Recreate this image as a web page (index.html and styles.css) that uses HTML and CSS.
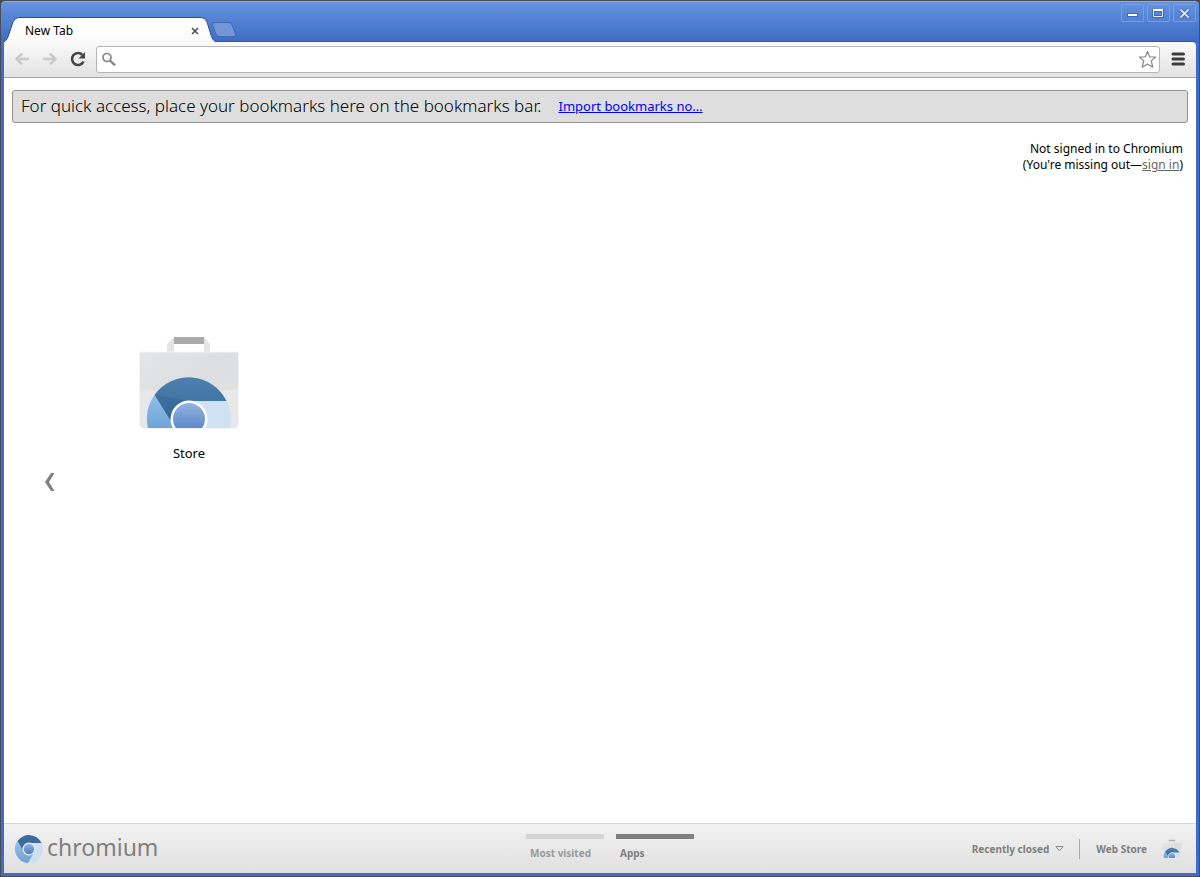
FILE: index.html
```html
<!DOCTYPE html>
<html lang="en">
<head>
<meta charset="utf-8">
<title>New Tab</title>
<link rel="stylesheet" href="styles.css">
</head>
<body>
<div class="window">
  <header class="titlebar">
    <div class="tab">
      <svg class="tab-shape" width="212" height="27" viewBox="0 0 212 27" aria-hidden="true">
        <defs>
          <linearGradient id="tabFill" x1="0" y1="0" x2="0" y2="1"><stop offset="0" stop-color="#fff"/><stop offset="1" stop-color="#fafafa"/></linearGradient>
        </defs>
        <path d="M0 27V26C3 24 4 21 5 18L9 6Q11 1.500 15 1.500H196Q201 1.500 203 6L207 19Q209 25.500 212 25.500V27Z" fill="url(#tabFill)"/>
        <path d="M0 26C3 24 4 21 5 18L9 6Q11 1.500 15 1.500H196Q201 1.500 203 6L207 19Q209 25.500 212 25.500" fill="none" stroke="#2b4f92"/>
      </svg>
      <span class="tab-title">New Tab</span>
      <button class="tab-close" aria-label="Close tab"><svg width="8" height="8" viewBox="0 0 8 8"><path d="M1 1L7 7M7 1L1 7" stroke="#555" stroke-width="1.700"/></svg></button>
    </div>
    <button class="new-tab" aria-label="New tab"><svg width="26" height="17" viewBox="0 0 26 17"><path d="M3 1.500H17Q20 1.500 21 4L24.500 13Q25 15.500 23 15.500H9Q6 15.500 5 13L1.500 4Q1 1.500 3 1.500Z" fill="#7396d8" stroke="#4569b2"/></svg></button>
    <div class="window-controls">
      <button class="control" aria-label="Minimize"><svg width="13" height="11" viewBox="0 0 13 11"><path d="M1 7H12" stroke="#2c559f" stroke-opacity=".6" stroke-width="4"/><path d="M2 7H11" stroke="#fff" stroke-width="2"/></svg></button>
      <button class="control" aria-label="Maximize"><svg width="13" height="11" viewBox="0 0 13 11"><path d="M1.500 2.500H10.500V8.500H1.500Z" fill="none" stroke="#2c559f" stroke-opacity=".6" stroke-width="3"/><path d="M1.500 2.500H10.500V8.500H1.500Z" fill="none" stroke="#e6eefb"/><path d="M1 2H11" stroke="#fff" stroke-width="2"/></svg></button>
      <button class="control" aria-label="Close"><svg width="13" height="11" viewBox="0 0 13 11"><path d="M2.500 1.500L10.500 9.500M10.500 1.500L2.500 9.500" stroke="#2c559f" stroke-opacity=".6" stroke-width="3.500"/><path d="M2.500 1.500L10.500 9.500M10.500 1.500L2.500 9.500" stroke="#f4f8ff" stroke-width="1.700"/></svg></button>
    </div>
  </header>

  <nav class="toolbar" aria-label="Navigation">
    <button class="tool" aria-label="Back" disabled><svg width="16" height="16" viewBox="0 0 16 16"><path d="M15 8H3M8 2.500L2.500 8L8 13.500" fill="none" stroke="#c9c9c9" stroke-width="2.400"/></svg></button>
    <button class="tool" aria-label="Forward" disabled><svg width="16" height="16" viewBox="0 0 16 16"><path d="M1 8H13M8 2.500L13.500 8L8 13.500" fill="none" stroke="#c9c9c9" stroke-width="2.400"/></svg></button>
    <button class="tool" aria-label="Reload"><svg width="16" height="16" viewBox="0 0 16 16"><path d="M12.500 4A6 6 0 1 0 13.500 10.500" fill="none" stroke="#474747" stroke-width="2.600"/><path d="M15 1V7.500H8.500Z" fill="#474747"/></svg></button>
    <div class="omnibox">
      <svg width="15" height="15" viewBox="0 0 15 15" aria-hidden="true"><circle cx="5" cy="5.500" r="4" fill="none" stroke="#858585" stroke-width="1.700"/><path d="M8 8.500L13 13.300" stroke="#858585" stroke-width="2.400"/></svg>
      <input class="address" type="text" aria-label="Address and search">
      <button class="star" aria-label="Bookmark this page"><svg width="19" height="19" viewBox="0 0 19 19"><path d="M9.500 1.500L11.700 7H17.500L13.200 10.900L14.800 17.200L9.500 13.900L4.200 17.200L5.800 10.900L1.500 7H7.300Z" fill="#fff" stroke="#858585" stroke-width="1.200" stroke-linejoin="round"/></svg></button>
    </div>
    <button class="menu" aria-label="Menu"><svg width="14" height="14" viewBox="0 0 14 14"><path d="M2 2H12.500M2 7H12.500M2 12H12.500" stroke="#3c3c3c" stroke-width="3" stroke-linecap="round"/></svg></button>
  </nav>

  <main class="page">
    <div class="bookmarks">
      <span class="hint">For quick access, place your bookmarks here on the bookmarks bar.</span>
      <a class="import" href="#import">Import bookmarks no…</a>
    </div>
    <p class="account">Not signed in to Chromium<br>(You're missing out—<a class="signin" href="#signin">sign in</a>)</p>
    <div class="apps">
      <button class="previous" aria-label="Previous page"><svg width="12" height="20" viewBox="0 0 12 20"><path d="M7 1H10.500L5 10L10.500 19H7L1 10Z" fill="#808080"/></svg></button>
      <a class="app" href="#store">
        <svg width="100" height="94" viewBox="0 0 100 94" aria-hidden="true">
          <defs>
            <linearGradient id="bag" x1="0" y1="0" x2="1" y2="1"><stop offset="0" stop-color="#e3e5e6"/><stop offset=".5" stop-color="#dcdedf"/><stop offset="1" stop-color="#e5e6e7"/></linearGradient>
            <linearGradient id="dark" x1="0" y1="0" x2="0" y2="1"><stop offset="0" stop-color="#4e7fac"/><stop offset="1" stop-color="#366a9d"/></linearGradient>
            <linearGradient id="mid" x1="0" y1="0" x2="0" y2="1"><stop offset="0" stop-color="#92bfe9"/><stop offset="1" stop-color="#70a4d8"/></linearGradient>
            <linearGradient id="core" x1="0" y1="0" x2="0" y2="1"><stop offset="0" stop-color="#91b3df"/><stop offset="1" stop-color="#4f7fc5"/></linearGradient>
            <clipPath id="bagClip"><path d="M0 0H100V92H0Z"/></clipPath>
          </defs>
          <g id="storeBag">
            <path d="M28 17V8L35 1H65L71 8V17H65V8H35V17Z" fill="#e3e4e5"/>
            <path d="M35 1H65V8H35Z" fill="#aaa"/>
            <path d="M.500 16H99.500V87Q99.500 92.500 94 92.500H6Q.500 92.500 .500 87Z" fill="url(#bag)" stroke="#f3f4f5"/>
            <path d="M1 54H99V87Q99 92 94 92H6Q1 92 1 87Z" fill="#e9eaeb" opacity=".75"/>
            <g clip-path="url(#bagClip)">
              <circle cx="50" cy="83" r="42" fill="#cfe1f2"/>
              <path d="M15.500 59A42 42 0 0 1 87.500 65H50L34 89Z" fill="url(#dark)"/>
              <path d="M15.500 59A42 42 0 0 0 9 92H35L33 87Z" fill="url(#mid)"/>
              <path d="M15.500 59L50 65L34 89Z" fill="#2f6093" opacity=".35"/>
              <circle cx="50" cy="83" r="18.500" fill="#fff"/>
              <circle cx="50" cy="83" r="16" fill="url(#core)"/>
            </g>
          </g>
        </svg>
        <span class="app-name">Store</span>
      </a>
    </div>
  </main>

  <footer class="footer">
    <div class="brand">
      <svg width="30" height="30" viewBox="0 0 30 30" aria-hidden="true">
        <defs>
          <linearGradient id="left" x1="0" y1="0" x2="0" y2="1"><stop offset="0" stop-color="#9cc3e8"/><stop offset="1" stop-color="#6c9fd4"/></linearGradient>
        </defs>
        <circle cx="15" cy="15" r="14" fill="#cde0f2"/>
        <path d="M3.500 7A14 14 0 0 0 14 29L20 18.500L9.500 17.500Z" fill="url(#left)"/>
        <path d="M3.500 7A14 14 0 0 1 27.500 9H15L9.500 17.500Z" fill="#3d6c9c"/>
        <circle cx="15" cy="15" r="6.500" fill="#e8f2fc"/>
        <circle cx="15" cy="15" r="5.200" fill="url(#core)"/>
      </svg>
      <span class="brand-name">chromium</span>
    </div>
    <div class="sections">
      <button class="section">Most visited</button>
      <button class="section current">Apps</button>
    </div>
    <div class="links">
      <button class="recent">Recently closed <svg width="9" height="6" viewBox="0 0 9 6" aria-hidden="true"><path d="M.800 .500H8.200L4.500 4.800Z" fill="none" stroke="#8b8b8b"/></svg></button>
      <a class="webstore" href="#webstore">Web Store <svg width="20" height="20" viewBox="0 0 100 94" aria-hidden="true"><use href="#storeBag"/></svg></a>
    </div>
  </footer>
</div>
</body>
</html>
```
FILE: styles.css
```css
* { box-sizing: border-box; }

body {
  margin: 0;
  background: #4d4a48;
  color: #000;
  font-family: "Noto Sans", "Open Sans", sans-serif;
  font-size: 12px;
}

button {
  display: flex;
  align-items: center;
  justify-content: center;
  margin: 0;
  padding: 0;
  border: 0;
  background: none;
  color: inherit;
  font: inherit;
}

svg { display: block; flex: none; }

.window {
  display: flex;
  flex-direction: column;
  min-height: 100vh;
  padding: 0 3px 3px;
  border: 1px solid #4a4d55;
  border-radius: 5px 5px 0 0;
  background: linear-gradient(#6694e0, #3f6dc6 40px);
  box-shadow: inset 0 1px #86a9e4;
}

.titlebar {
  display: flex;
  height: 41px;
  box-shadow: inset 0 -1px #3459a3;
}

.tab {
  position: relative;
  display: flex;
  align-items: center;
  justify-content: space-between;
  width: 210px;
  height: 26px;
  margin-top: 15px;
  padding: 3px 14px 0 21px;
}

.tab-shape { position: absolute; left: 0; top: 0; }
.tab-title, .tab-close { position: relative; }
.tab-close { width: 10px; height: 12px; }
.new-tab { align-self: flex-start; margin: 20px 0 0 -3px; }

.window-controls { display: flex; gap: 3px; margin-left: auto; padding-top: 3px; }

.control {
  width: 23px;
  height: 18px;
  border: 1px solid #789de0;
  border-radius: 2px;
}

.toolbar {
  display: flex;
  align-items: center;
  height: 36px;
  padding: 0 11px 1px 8px;
  border-bottom: 1px solid #a5a5a5;
  border-top-right-radius: 4px;
  background: linear-gradient(#fafafa, #e2e2e2);
}

.tool { width: 20px; height: 20px; margin-right: 8px; }

.omnibox {
  display: flex;
  flex: 1;
  align-items: center;
  height: 27px;
  padding: 0 2px 0 5px;
  border: 1px solid #b5b5b5;
  border-radius: 3px;
  background: #fff;
}

.address {
  flex: 1;
  min-width: 0;
  height: 24px;
  border: 0;
  background: none;
  font: inherit;
}

.menu { margin-left: 11px; }

.page {
  display: flex;
  flex: 1;
  flex-direction: column;
  padding: 12px 8px;
  background: #fff;
}

.bookmarks {
  display: flex;
  align-items: center;
  gap: 17px;
  height: 33px;
  padding: 0 8px 2px;
  border: 1px solid #929292;
  border-radius: 3px;
  background: #dedede;
}

.hint { font: 300 17px "Noto Sans", sans-serif; }
.import { color: #00f; font-size: 13px; }

.account {
  margin: 18px 5px 0;
  font-size: 12px;
  line-height: 16px;
  text-align: right;
}

.signin { color: #666; }

.apps {
  display: flex;
  align-items: flex-start;
  gap: 83px;
  padding: 163px 32px 0;
}

.previous { margin-top: 136px; }

.app {
  display: flex;
  flex-direction: column;
  align-items: center;
  gap: 14px;
  color: #000;
  font-size: 13px;
  line-height: 18px;
  text-decoration: none;
}

.footer {
  display: grid;
  grid-template-columns: 1fr auto 1fr;
  height: 50px;
  border-top: 1px solid #d5d5d5;
  background: linear-gradient(#f2f2f2, #e0e0e0);
  color: #7f7f7f;
  font: 700 10px "Noto Sans", sans-serif;
}

.brand { display: flex; align-items: center; gap: 3px; padding-left: 10px; }
.brand-name { padding-bottom: 3px; font: 400 23px/32px "Noto Sans", sans-serif; }

.sections { display: flex; align-items: flex-start; gap: 12px; padding-top: 10px; margin-left: 20px; }

.section {
  justify-content: flex-start;
  width: 78px;
  padding: 7px 0 0 4px;
  border-top: 5px solid #d4d4d4;
  color: #999;
  white-space: nowrap;
}

.current { border-color: #808080; color: #7f7f7f; }

.links { display: flex; align-items: center; justify-content: flex-end; padding-right: 14px; }

.recent { gap: 6px; height: 20px; padding-right: 15px; border-right: 1px solid #aaa; }

.webstore {
  display: flex;
  align-items: center;
  gap: 15px;
  padding-left: 16px;
  color: #7f7f7f;
  text-decoration: none;
}
```
